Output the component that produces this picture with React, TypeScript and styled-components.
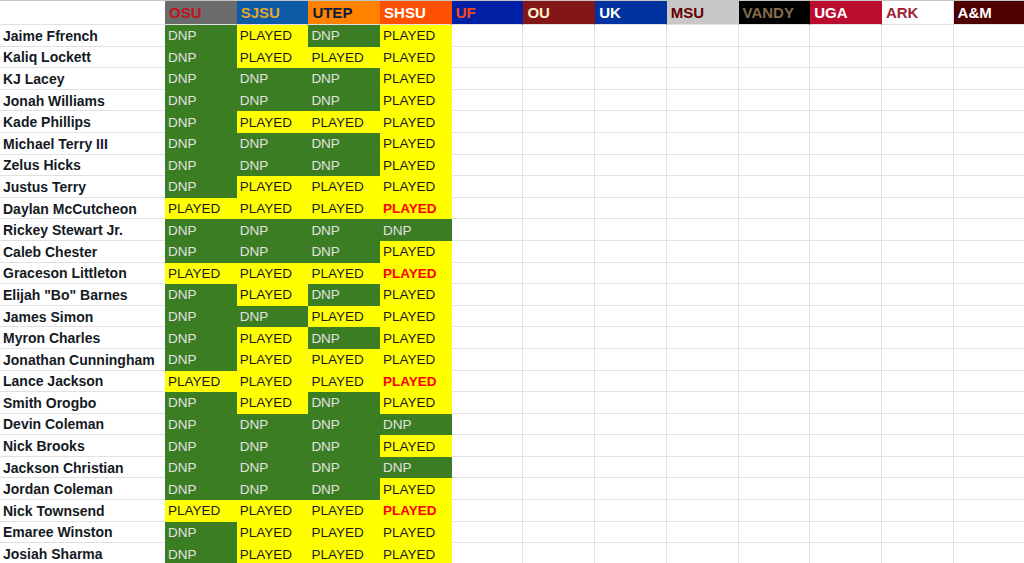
import styled, { createGlobalStyle } from "styled-components";

type Mark = "D" | "P" | "R";

interface Player {
    name: string;
    games: Mark[];
}

interface Team {
    code: string;
    bg: string;
    fg: string;
}

const teams: Team[] = [
    { code: "OSU", bg: "#6b6b6b", fg: "#c0141c" },
    { code: "SJSU", bg: "#0d5aa7", fg: "#e2a72e" },
    { code: "UTEP", bg: "#ff8200", fg: "#0b1c3d" },
    { code: "SHSU", bg: "#fe5000", fg: "#ffffff" },
    { code: "UF", bg: "#0021a5", fg: "#fa4616" },
    { code: "OU", bg: "#841617", fg: "#fdf3c8" },
    { code: "UK", bg: "#0033a0", fg: "#ffffff" },
    { code: "MSU", bg: "#c8c8c8", fg: "#660000" },
    { code: "VANDY", bg: "#000000", fg: "#866d4b" },
    { code: "UGA", bg: "#ba0c2f", fg: "#ffffff" },
    { code: "ARK", bg: "#ffffff", fg: "#9d2235" },
    { code: "A&M", bg: "#500000", fg: "#ffffff" },
];

const players: Player[] = [
    { name: "Jaime Ffrench", games: ["D", "P", "D", "P"] },
    { name: "Kaliq Lockett", games: ["D", "P", "P", "P"] },
    { name: "KJ Lacey", games: ["D", "D", "D", "P"] },
    { name: "Jonah Williams", games: ["D", "D", "D", "P"] },
    { name: "Kade Phillips", games: ["D", "P", "P", "P"] },
    { name: "Michael Terry III", games: ["D", "D", "D", "P"] },
    { name: "Zelus Hicks", games: ["D", "D", "D", "P"] },
    { name: "Justus Terry", games: ["D", "P", "P", "P"] },
    { name: "Daylan McCutcheon", games: ["P", "P", "P", "R"] },
    { name: "Rickey Stewart Jr.", games: ["D", "D", "D", "D"] },
    { name: "Caleb Chester", games: ["D", "D", "D", "P"] },
    { name: "Graceson Littleton", games: ["P", "P", "P", "R"] },
    { name: "Elijah \"Bo\" Barnes", games: ["D", "P", "D", "P"] },
    { name: "James Simon", games: ["D", "D", "P", "P"] },
    { name: "Myron Charles", games: ["D", "P", "D", "P"] },
    { name: "Jonathan Cunningham", games: ["D", "P", "P", "P"] },
    { name: "Lance Jackson", games: ["P", "P", "P", "R"] },
    { name: "Smith Orogbo", games: ["D", "P", "D", "P"] },
    { name: "Devin Coleman", games: ["D", "D", "D", "D"] },
    { name: "Nick Brooks", games: ["D", "D", "D", "P"] },
    { name: "Jackson Christian", games: ["D", "D", "D", "D"] },
    { name: "Jordan Coleman", games: ["D", "D", "D", "P"] },
    { name: "Nick Townsend", games: ["P", "P", "P", "R"] },
    { name: "Emaree Winston", games: ["D", "P", "P", "P"] },
    { name: "Josiah Sharma", games: ["D", "P", "P", "P"] },
];

const GlobalStyle = createGlobalStyle`
    html, body {
        margin: 0;
        padding: 0;
        background: #ffffff;
    }
    body {
        font-family: "Liberation Sans", Arial, sans-serif;
        overflow: hidden;
    }
`;

const App = () => {
    return (
        <>
            <GlobalStyle />
            <Sheet>
                <HeaderBlank />
                {teams.map((team) => (
                    <HeaderCell key={team.code} $bg={team.bg} $fg={team.fg}>
                        {team.code}
                    </HeaderCell>
                ))}

                {players.map((player) => (
                    <Row key={player.name}>
                        <NameCell>{player.name}</NameCell>
                        {teams.map((team, i) => {
                            const mark = player.games[i];
                            if (!mark) return <EmptyCell key={team.code} />;
                            return (
                                <StatusCell key={team.code} $mark={mark}>
                                    {mark === "D" ? "DNP" : "PLAYED"}
                                </StatusCell>
                            );
                        })}
                    </Row>
                ))}
            </Sheet>
        </>
    );
};

const Sheet = styled.div`
    display: grid;
    grid-template-columns: 165px repeat(12, 71.7px);
    grid-template-rows: 24px repeat(25, 21.6px);
    width: 1030px;
    border-top: 1px solid #c6c6c6;
    overflow: hidden;
`;

const Row = styled.div`
    display: contents;
`;

const BaseCell = styled.div`
    box-sizing: border-box;
    display: flex;
    align-items: center;
    padding: 1px 3px 0;
    white-space: nowrap;
    overflow: hidden;
    border-bottom: 1px solid #e1e1e1;
    border-right: 1px solid #e1e1e1;
`;

const HeaderBlank = styled(BaseCell)`
    border-right: none;
`;

const HeaderCell = styled(BaseCell)<{ $bg: string; $fg: string }>`
    background: ${({ $bg }) => $bg};
    color: ${({ $fg }) => $fg};
    border-right-color: ${({ $bg }) => ($bg === "#ffffff" ? "#e1e1e1" : $bg)};
    font-size: 15px;
    font-weight: 700;
    padding: 0 3px 1px 4px;
`;

const NameCell = styled(BaseCell)`
    font-size: 14px;
    font-weight: 700;
    color: #141a24;
    border-right: none;
`;

const EmptyCell = styled(BaseCell)``;

const StatusCell = styled(BaseCell)<{ $mark: Mark }>`
    font-size: 13.5px;
    background: ${({ $mark }) => ($mark === "D" ? "#3b7d23" : "#ffff00")};
    border-color: ${({ $mark }) => ($mark === "D" ? "#3b7d23" : "#ffff00")};
    color: ${({ $mark }) =>
        $mark === "D" ? "#e2e2e2" : $mark === "R" ? "#ff0000" : "#1a1a1a"};
    font-weight: ${({ $mark }) => ($mark === "R" ? 700 : 400)};
`;

export default App;
